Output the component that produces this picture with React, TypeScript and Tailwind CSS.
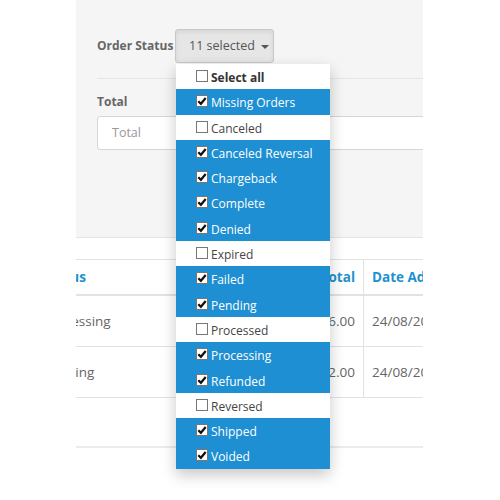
import React from "react";

const STATUSES = [
  { name: "Missing Orders", on: true },
  { name: "Canceled", on: false },
  { name: "Canceled Reversal", on: true },
  { name: "Chargeback", on: true },
  { name: "Complete", on: true },
  { name: "Denied", on: true },
  { name: "Expired", on: false },
  { name: "Failed", on: true },
  { name: "Pending", on: true },
  { name: "Processed", on: false },
  { name: "Processing", on: true },
  { name: "Refunded", on: true },
  { name: "Reversed", on: false },
  { name: "Shipped", on: true },
  { name: "Voided", on: true },
];

const Box = ({ on }: { on: boolean }) => (
  <span className="mt-[6px] mr-[3px] flex h-[12px] w-[12px] shrink-0 items-center justify-center border border-[#777] bg-white">
    {on && (
      <svg width="10" height="10" viewBox="0 0 10 10">
        <path d="M1.3 5.2 L3.9 7.8 L8.7 2" fill="none" stroke="#111" strokeWidth="2.2" />
      </svg>
    )}
  </span>
);

const StatusMenu = () => (
  <ul className="absolute left-[1px] top-[35px] z-10 w-[154px] bg-white shadow-[0_6px_14px_rgba(0,0,0,0.22)]">
    <li className="flex h-[25.3px] pl-[20px] text-[12px] font-bold text-[#333]">
      <Box on={false} />
      <span className="leading-[27px]">Select all</span>
    </li>
    {STATUSES.map((s) => (
      <li
        key={s.name}
        className={
          s.on
            ? "flex h-[25.3px] pl-[20px] text-[12px] bg-[#1e8fd2] text-white"
            : "flex h-[25.3px] pl-[20px] text-[12px] bg-white text-[#444]"
        }
      >
        <Box on={s.on} />
        <span className="leading-[27px] whitespace-nowrap">{s.name}</span>
      </li>
    ))}
  </ul>
);

export default function App() {
  return (
    <div className="h-[500px] w-[500px] bg-white font-['Open_Sans',sans-serif]">
      <div className="ml-[76px] h-[500px] w-[347px] overflow-hidden">
        <div className="h-[238px] border-b border-[#e4e4e4] bg-[#f5f5f5] pl-[21px] pt-[29px]">
          <div className="flex items-center">
            <label className="w-[78px] whitespace-nowrap text-[12px] font-bold text-[#666]">Order Status</label>
            <div className="relative">
              <button className="flex h-[34px] w-[99px] items-center whitespace-nowrap rounded-[3px] border border-[#c8c8c8] bg-[#e6e6e6] pl-[13px] text-[12.5px] text-[#555] shadow-[inset_0_2px_4px_rgba(0,0,0,0.08)]">
                11 selected
                <span className="ml-[6px] mt-[1px] h-0 w-0 border-x-[4px] border-t-[4px] border-x-transparent border-t-[#555]" />
              </button>
              <StatusMenu />
            </div>
          </div>
          <div className="mt-[15px] border-t border-[#e6e6e6]" />
          <label className="mt-[14px] block text-[12px] font-bold text-[#666]">Total</label>
          <div className="mt-[5px] flex h-[34px] w-[360px] items-center rounded-[3px] border border-[#d6d6d6] bg-white pl-[14px] text-[12.5px] text-[#999]">
            Total
          </div>
        </div>

        <div className="mt-[21px] -ml-[41px] w-[480px] text-[13.5px]">
          <div className="flex h-[37px] border-y border-b-2 border-[#e2e2e2] font-bold text-[#1e91cf]">
            <div className="flex w-[141px] items-center pl-[8px]">Status</div>
            <div className="flex w-[188px] items-center justify-end border-x border-[#e2e2e2] pr-[8px]">Total</div>
            <div className="flex flex-1 items-center pl-[8px]">Date Added</div>
          </div>
          {[
            ["Processing", "$106.00", "24/08/2016"],
            ["Pending", "$102.00", "24/08/2016"],
          ].map((r) => (
            <div key={r[1]} className="flex h-[51px] border-b border-[#e2e2e2] text-[#666]">
              <div className="flex w-[141px] items-center pl-[8px]">{r[0]}</div>
              <div className="flex w-[188px] items-center justify-end border-x border-[#e2e2e2] pr-[8px]">{r[1]}</div>
              <div className="flex flex-1 items-center pl-[8px]">{r[2]}</div>
            </div>
          ))}
          <div className="h-[50px] border-b-2 border-[#ececec]" />
        </div>
      </div>
    </div>
  );
}
